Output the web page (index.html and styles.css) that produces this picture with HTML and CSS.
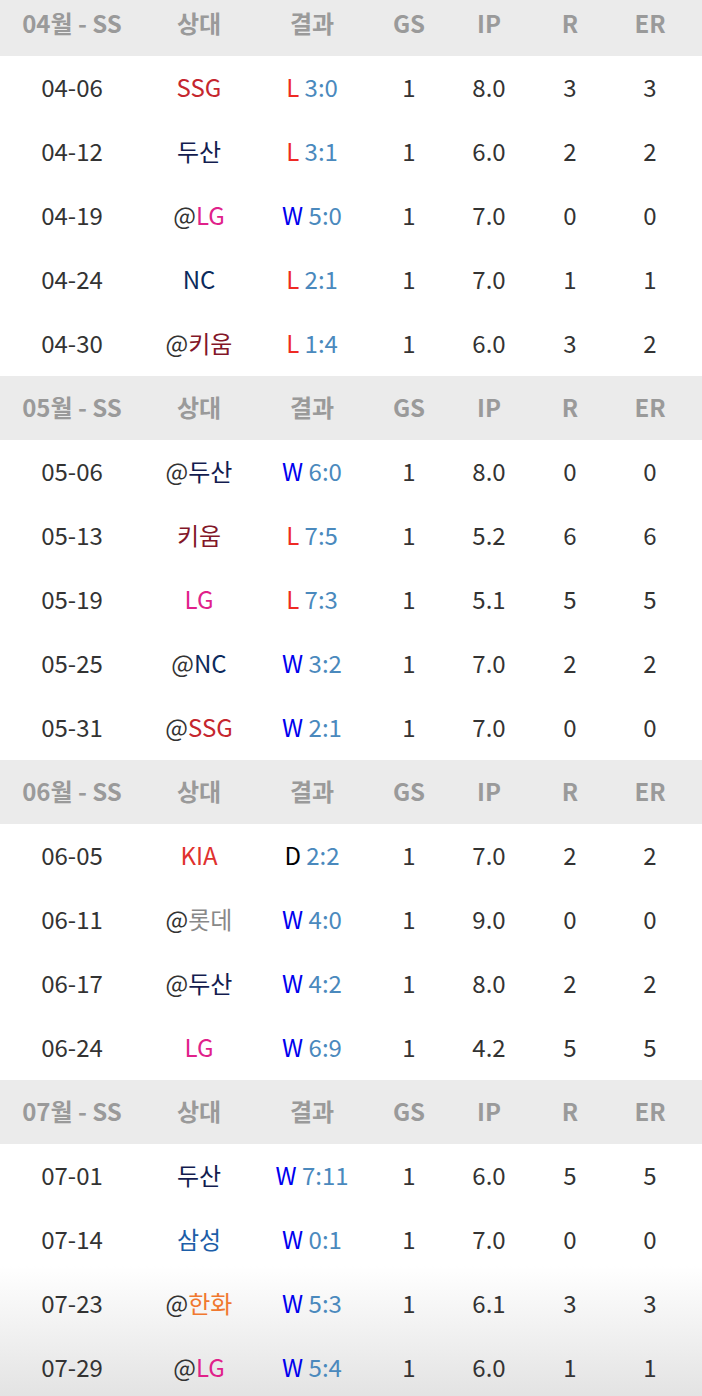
FILE: index.html
```html
<html>
<head>
<meta name="viewport" content="width=device-width, initial-scale=1.0">
<link rel="stylesheet" href="styles.css">
</head>
<body>

<div class="log">

    <div class="row head"><span>04월 - SS</span><span>상대</span><span>결과</span><span>GS</span><span>IP</span><span>R</span><span>ER</span></div>
    <div class="row"><span>04-06</span><span class="ssg">SSG</span><span><b class="l">L</b> <i>3:0</i></span><span>1</span><span>8.0</span><span>3</span><span>3</span></div>
    <div class="row"><span>04-12</span><span class="ds">두산</span><span><b class="l">L</b> <i>3:1</i></span><span>1</span><span>6.0</span><span>2</span><span>2</span></div>
    <div class="row"><span>04-19</span><span>@<em class="lg">LG</em></span><span><b class="w">W</b> <i>5:0</i></span><span>1</span><span>7.0</span><span>0</span><span>0</span></div>
    <div class="row"><span>04-24</span><span class="nc">NC</span><span><b class="l">L</b> <i>2:1</i></span><span>1</span><span>7.0</span><span>1</span><span>1</span></div>
    <div class="row"><span>04-30</span><span>@<em class="kw">키움</em></span><span><b class="l">L</b> <i>1:4</i></span><span>1</span><span>6.0</span><span>3</span><span>2</span></div>

    <div class="row head"><span>05월 - SS</span><span>상대</span><span>결과</span><span>GS</span><span>IP</span><span>R</span><span>ER</span></div>
    <div class="row"><span>05-06</span><span>@<em class="ds">두산</em></span><span><b class="w">W</b> <i>6:0</i></span><span>1</span><span>8.0</span><span>0</span><span>0</span></div>
    <div class="row"><span>05-13</span><span class="kw">키움</span><span><b class="l">L</b> <i>7:5</i></span><span>1</span><span>5.2</span><span>6</span><span>6</span></div>
    <div class="row"><span>05-19</span><span class="lg">LG</span><span><b class="l">L</b> <i>7:3</i></span><span>1</span><span>5.1</span><span>5</span><span>5</span></div>
    <div class="row"><span>05-25</span><span>@<em class="nc">NC</em></span><span><b class="w">W</b> <i>3:2</i></span><span>1</span><span>7.0</span><span>2</span><span>2</span></div>
    <div class="row"><span>05-31</span><span>@<em class="ssg">SSG</em></span><span><b class="w">W</b> <i>2:1</i></span><span>1</span><span>7.0</span><span>0</span><span>0</span></div>

    <div class="row head"><span>06월 - SS</span><span>상대</span><span>결과</span><span>GS</span><span>IP</span><span>R</span><span>ER</span></div>
    <div class="row"><span>06-05</span><span class="kia">KIA</span><span><b class="d">D</b> <i>2:2</i></span><span>1</span><span>7.0</span><span>2</span><span>2</span></div>
    <div class="row"><span>06-11</span><span>@<em class="lt">롯데</em></span><span><b class="w">W</b> <i>4:0</i></span><span>1</span><span>9.0</span><span>0</span><span>0</span></div>
    <div class="row"><span>06-17</span><span>@<em class="ds">두산</em></span><span><b class="w">W</b> <i>4:2</i></span><span>1</span><span>8.0</span><span>2</span><span>2</span></div>
    <div class="row"><span>06-24</span><span class="lg">LG</span><span><b class="w">W</b> <i>6:9</i></span><span>1</span><span>4.2</span><span>5</span><span>5</span></div>

    <div class="row head"><span>07월 - SS</span><span>상대</span><span>결과</span><span>GS</span><span>IP</span><span>R</span><span>ER</span></div>
    <div class="row"><span>07-01</span><span class="ds">두산</span><span><b class="w">W</b> <i>7:11</i></span><span>1</span><span>6.0</span><span>5</span><span>5</span></div>
    <div class="row"><span>07-14</span><span class="ss">삼성</span><span><b class="w">W</b> <i>0:1</i></span><span>1</span><span>7.0</span><span>0</span><span>0</span></div>
    <div class="row"><span>07-23</span><span>@<em class="hh">한화</em></span><span><b class="w">W</b> <i>5:3</i></span><span>1</span><span>6.1</span><span>3</span><span>3</span></div>
    <div class="row"><span>07-29</span><span>@<em class="lg">LG</em></span><span><b class="w">W</b> <i>5:4</i></span><span>1</span><span>6.0</span><span>1</span><span>1</span></div>

</div>

</body>
</html>
```

FILE: styles.css
```css
body, html {
    margin: 0;
    padding: 0;
    font-family: "Noto Sans CJK KR", "Noto Sans", sans-serif;
    font-size: 24px;
    line-height: 1;
    color: #333;
    overflow: hidden;
}

/* 아래쪽 흐림 (글자 뒤에만) */
body {
    background: linear-gradient(#fff 0, #fff calc(100% - 130px), #e3e3e3 100%) fixed;
}

.log {
    margin-top: -8px;
}

.row {
    display: grid;
    grid-template-columns: 144px 110px 116px 78px 82px 80px 80px;
    height: 64px;
    align-items: center;
    text-align: center;
    white-space: nowrap;
}

.row span {
    margin-top: -3px;
}

.row b,
.row i,
.row em {
    font-weight: normal;
    font-style: normal;
}

.head {
    background: #ebebeb;
    color: #9a9a9a;
    font-weight: bold;
}

/* 결과 */
.l { color: #ee2a24; }
.w { color: #0000ee; }
.d { color: #000; }
.row i { color: #4a89bd; }

/* 구단 색 */
.ssg { color: #c5262e; }
.ds  { color: #131c4f; }
.lg  { color: #e0218a; }
.nc  { color: #0b2a5c; }
.kw  { color: #821628; }
.kia { color: #e0312e; }
.lt  { color: #888; }
.ss  { color: #1c5ea8; }
.hh  { color: #f0782f; }
```
